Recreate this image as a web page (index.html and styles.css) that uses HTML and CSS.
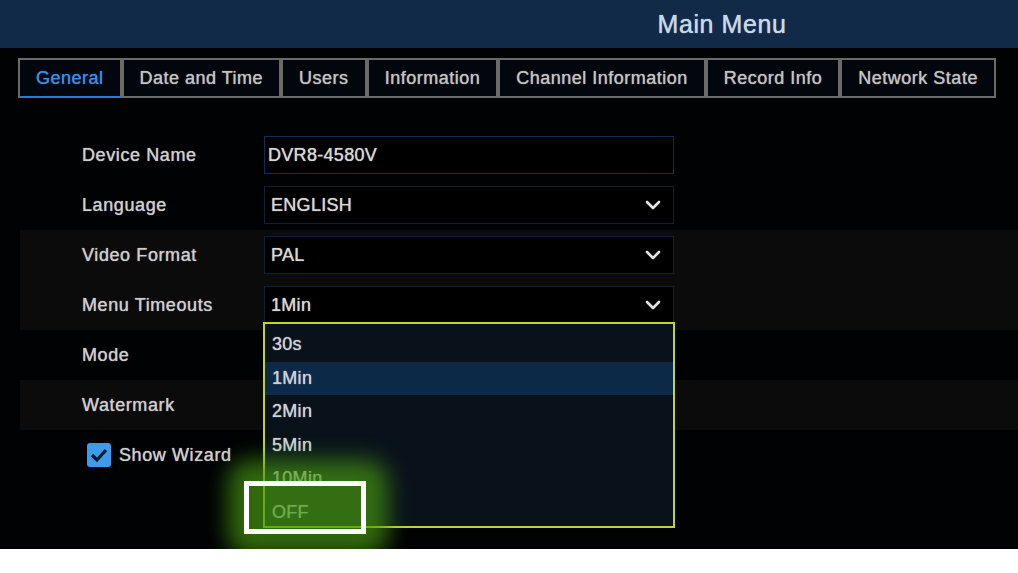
FILE: index.html
```html
<!DOCTYPE html>
<html lang="en">
<head>
    <meta charset="UTF-8">
    <title>Main Menu</title>
    <link rel="stylesheet" href="styles.css">
</head>
<body>
    <div class="screen">
        <header class="topbar">
            <h1>Main Menu</h1>
        </header>

        <nav class="tabs">
            <div class="tab active">General</div>
            <div class="tab">Date and Time</div>
            <div class="tab">Users</div>
            <div class="tab">Information</div>
            <div class="tab">Channel Information</div>
            <div class="tab">Record Info</div>
            <div class="tab">Network State</div>
        </nav>

        <main class="form">
            <div class="row">
                <span class="label">Device Name</span>
                <div class="field text-field">DVR8-4580V</div>
            </div>
            <div class="row">
                <span class="label">Language</span>
                <div class="field"><span>ENGLISH</span>
                    <svg class="chevron" width="16" height="10" viewBox="0 0 16 10"><polyline points="2,2 8,8 14,2"/></svg>
                </div>
            </div>
            <div class="row band">
                <span class="label">Video Format</span>
                <div class="field"><span>PAL</span>
                    <svg class="chevron" width="16" height="10" viewBox="0 0 16 10"><polyline points="2,2 8,8 14,2"/></svg>
                </div>
            </div>
            <div class="row band">
                <span class="label">Menu Timeouts</span>
                <div class="field"><span>1Min</span>
                    <svg class="chevron" width="16" height="10" viewBox="0 0 16 10"><polyline points="2,2 8,8 14,2"/></svg>
                </div>
            </div>
            <div class="row">
                <span class="label">Mode</span>
            </div>
            <div class="row band">
                <span class="label">Watermark</span>
            </div>
            <div class="check-row">
                <span class="checkbox">
                    <svg width="24" height="24" viewBox="0 0 24 24"><polyline points="5,12 10,17 19,7"/></svg>
                </span>
                <span class="label">Show Wizard</span>
            </div>
        </main>

        <!-- open list of the Menu Timeouts select -->
        <ul class="dropdown">
            <li>30s</li>
            <li class="selected">1Min</li>
            <li>2Min</li>
            <li>5Min</li>
            <li>10Min</li>
            <li>OFF</li>
        </ul>

        <div class="glow"></div>
        <div class="callout"></div>
    </div>
</body>
</html>
```

FILE: styles.css
```css
* {
    box-sizing: border-box;
}

body {
    margin: 0;
    background-color: #fff;
    font-family: "Liberation Sans", Arial, sans-serif;
}

.screen {
    position: relative;
    height: 549px;
    background-color: #010204;
}

.topbar {
    height: 48px;
    background-color: #112a47;
    display: flex;
    align-items: center;
    justify-content: center;
    padding-left: 426px;
}

.topbar h1 {
    margin: 0;
    font-size: 25px;
    font-weight: normal;
    letter-spacing: 0.6px;
    color: #c6d9e9;
    text-shadow: 0 0 1px #c6d9e9;
}

.tabs {
    display: flex;
    height: 40px;
    margin: 10px 0 0 18px;
}

.tab {
    display: flex;
    align-items: center;
    flex-shrink: 0;
    white-space: nowrap;
    padding: 0 16px;
    border: 2px solid #6a6a6a;
    background-color: #03070d;
    font-size: 18px;
    letter-spacing: 0.5px;
    color: #c2c2c2;
    text-shadow: 0 0 1px #c2c2c2;
}

.tab.active {
    color: #3b8ee0;
    text-shadow: 0 0 1px #3b8ee0;
    border-bottom-color: #1d7fe3;
}

.form {
    margin-top: 32px;
}

.row {
    display: grid;
    grid-template-columns: 182px 410px;
    align-items: center;
    height: 50px;
    margin-left: 20px;
    padding-left: 62px;
}

.row.band {
    background-color: #0b0b0b;
}

.label {
    font-size: 18px;
    letter-spacing: 0.6px;
    color: #cdcdcd;
    text-shadow: 0 0 1px #cdcdcd;
}

.field {
    display: flex;
    align-items: center;
    justify-content: space-between;
    height: 38px;
    padding: 0 12px 0 6px;
    border: 1px solid #111f31;
    background-color: #000;
    font-size: 18px;
    letter-spacing: 0.3px;
    color: #d6d6d6;
    text-shadow: 0 0 1px #d6d6d6;
}

.text-field {
    padding-left: 3px;
    border-color: #0f2e55;
}

.chevron polyline {
    fill: none;
    stroke: #e2e2e2;
    stroke-width: 2.6;
    stroke-linecap: round;
    stroke-linejoin: round;
}

.check-row {
    display: flex;
    align-items: center;
    gap: 8px;
    height: 50px;
    padding-left: 87px;
}

.checkbox {
    display: flex;
    width: 24px;
    height: 24px;
    border-radius: 3px;
    background-color: #3d9be9;
}

.checkbox polyline {
    fill: none;
    stroke: #0c1a2c;
    stroke-width: 3.2;
}

.dropdown {
    position: absolute;
    left: 263px;
    top: 322px;
    width: 412px;
    height: 206px;
    margin: 0;
    padding: 4px 0 0;
    list-style: none;
    overflow: hidden;
    border: 2px solid #c3d42c;
    background-color: #09121b;
}

.dropdown li {
    display: flex;
    align-items: center;
    height: 33.5px;
    padding-left: 7px;
    font-size: 18px;
    letter-spacing: 0.3px;
    color: #ccd2d8;
    text-shadow: 0 0 1px #ccd2d8;
}

.dropdown li.selected {
    background-color: #0c2a47;
}

.glow {
    position: absolute;
    left: 228px;
    top: 460px;
    width: 160px;
    height: 96px;
    border-radius: 22px;
    background-color: rgba(70, 150, 16, 0.7);
    filter: blur(11px);
    pointer-events: none;
}

.callout {
    position: absolute;
    left: 244px;
    top: 481px;
    width: 122px;
    height: 53px;
    border: 5px solid #fff;
}
```
